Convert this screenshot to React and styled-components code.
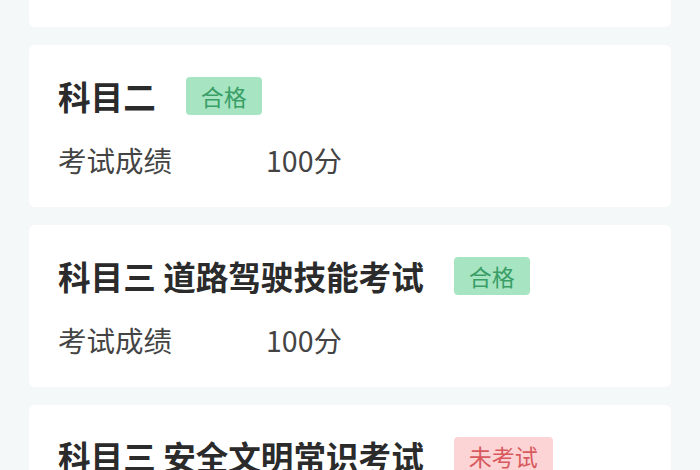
import React from "react";
import styled, { createGlobalStyle } from "styled-components";

const GlobalStyle = createGlobalStyle`
  html, body {
    margin: 0;
    padding: 0;
    height: 100%;
    overflow: hidden;
    background: #f5f8f8;
  }
  body {
    font-family: "Noto Sans CJK SC", "Noto Sans", sans-serif;
  }
`;

const Page = styled.div`
  width: 700px;
  height: 470px;
  overflow: hidden;
  background: #f5f8f8;
`;

const List = styled.div`
  display: flex;
  flex-direction: column;
  gap: 18px;
  padding: 0 29px;
`;

// tail of the previous card, scrolled mostly out of view
const CardTail = styled.div`
  background: #ffffff;
  height: 27px;
  border-radius: 0 0 6px 6px;
`;

const Card = styled.div`
  background: #ffffff;
  border-radius: 6px;
  height: 162px;
  box-sizing: border-box;
  padding: 31px 29px 0 29px;
  display: flex;
  flex-direction: column;
  gap: 23px;
`;

const TitleRow = styled.div`
  display: flex;
  align-items: center;
  gap: 30px;
  height: 40px;
`;

const Title = styled.div`
  font-size: 32.6px;
  font-weight: 700;
  color: #2b2b2b;
  line-height: 40px;
  white-space: nowrap;
`;

const Badge = styled.div`
  height: 38px;
  line-height: 38px;
  padding: 0 15px;
  border-radius: 4px;
  font-size: 23px;
  background: ${p => (p.passed ? "#a7e5c2" : "#fcd4d5")};
  color: ${p => (p.passed ? "#3a9e67" : "#d85a5e")};
`;

const ScoreRow = styled.div`
  display: flex;
  align-items: center;
  height: 40px;
  font-size: 28.5px;
  color: #444444;
`;

const Label = styled.span`
  width: 208px;
`;

const Value = styled.span``;

const items = [
  { title: "科目二", passed: true, score: "100分" },
  { title: "科目三 道路驾驶技能考试", passed: true, score: "100分" },
  { title: "科目三 安全文明常识考试", passed: false, score: "" },
];

export default function App() {
  return (
    <Page>
      <GlobalStyle />
      <List>
        <CardTail />
        {items.map((it, i) => (
          <Card key={i}>
            <TitleRow>
              <Title>{it.title}</Title>
              <Badge passed={it.passed}>{it.passed ? "合格" : "未考试"}</Badge>
            </TitleRow>
            <ScoreRow>
              <Label>考试成绩</Label>
              <Value>{it.score || "--"}</Value>
            </ScoreRow>
          </Card>
        ))}
      </List>
    </Page>
  );
}
